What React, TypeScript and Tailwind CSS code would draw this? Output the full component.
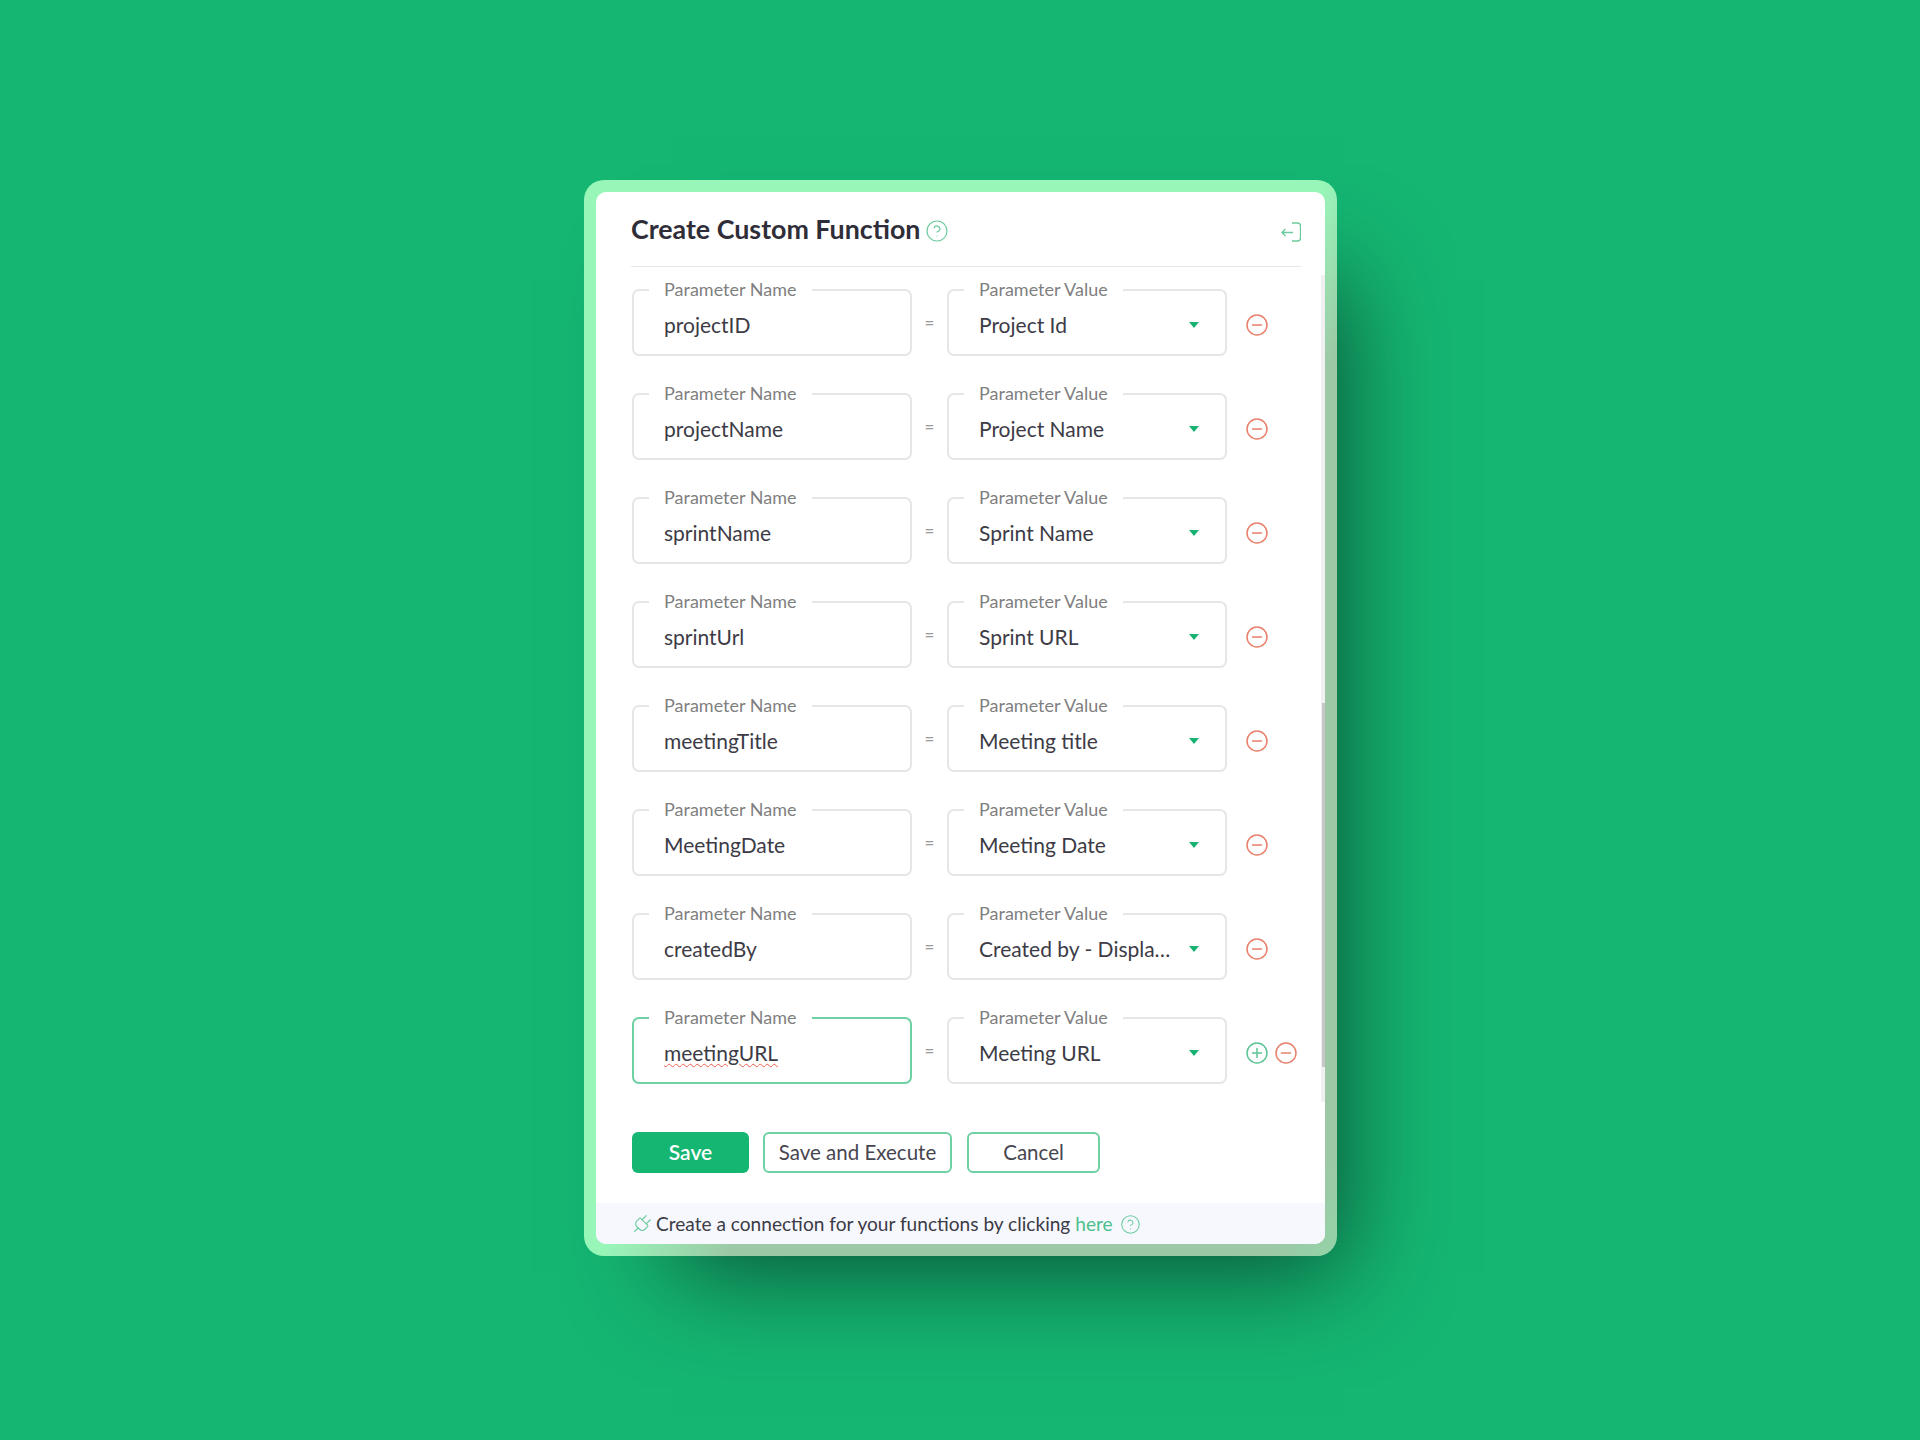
import { CircleHelp, Plug } from "lucide-react";

const rows = [
  { name: "projectID", value: "Project Id" },
  { name: "projectName", value: "Project Name" },
  { name: "sprintName", value: "Sprint Name" },
  { name: "sprintUrl", value: "Sprint URL" },
  { name: "meetingTitle", value: "Meeting title" },
  { name: "MeetingDate", value: "Meeting Date" },
  { name: "createdBy", value: "Created by - Display Name" },
  { name: "meetingURL", value: "Meeting URL", active: true },
];

function RoundIcon({ kind }: { kind: "plus" | "minus" }) {
  const stroke = kind === "plus" ? "#5cc494" : "#e8806c";
  return (
    <svg width="22" height="22" viewBox="0 0 22 22" fill="none" stroke={stroke} strokeWidth="1.5">
      <circle cx="11" cy="11" r="10" />
      <path d="M6.5 11h9" strokeLinecap="round" />
      {kind === "plus" && <path d="M11 6.5v9" strokeLinecap="round" />}
    </svg>
  );
}

function Field({
  label,
  active,
  children,
}: {
  label: string;
  active?: boolean;
  children: React.ReactNode;
}) {
  return (
    <div
      className={`relative flex h-[67px] w-[280px] items-center rounded-[7px] border-2 pl-[30px] pr-[20px] pt-[4px] ${
        active ? "border-[#6fd0a4]" : "border-[#e6e6e6]"
      }`}
    >
      <span className="absolute -top-[13px] left-[15px] bg-white px-[15px] text-[18px] leading-[22px] text-[#7f7f7f]">
        {label}
      </span>
      {children}
    </div>
  );
}

export default function App() {
  return (
    <div className="flex h-[1440px] justify-center bg-[#15b572] pl-px pt-[180px] font-['Lato',sans-serif] text-[#3c3b46]">
      <div className="h-[1076px] w-[753px] rounded-[20px] bg-[linear-gradient(124deg,#98f6b9_50%,#9cc8a5_59%,#9cc8a5_95%,#94d3a8_100%)] p-[12px] shadow-[48px_58px_95px_-42px_rgba(0,0,0,0.55)]">
        <div className="relative flex h-full flex-col overflow-hidden rounded-[10px] bg-white">
          <div className="ml-[35px] mr-[24px] flex h-[75px] items-center justify-between border-b border-[#e8e8e8]">
            <div className="flex items-center gap-[5px]">
              <h1 className="text-[26.8px] font-bold leading-[32px] text-[#2f2d38]">Create Custom Function</h1>
              <CircleHelp size={24} strokeWidth={1.2} className="mt-[4px] text-[#6ccb9e]" />
            </div>
            <svg width="20" height="20" viewBox="0 0 20 20" fill="none" stroke="#6ccb9e" strokeWidth="1.4" className="mt-[5px]">
              <path d="M11 1h5.5a3 3 0 0 1 3 3v12a3 3 0 0 1-3 3H11" />
              <path d="M1 10.5h11M4.5 7l-3.5 3.5 3.5 3.5" />
            </svg>
          </div>

          <div className="flex flex-col gap-[37px] pl-[36px] pt-[22px]">
            {rows.map((row) => (
              <div key={row.name} className="flex items-center">
                <Field label="Parameter Name" active={row.active}>
                  <span
                    className={`text-[21px] leading-[30px] ${
                      row.active ? "underline decoration-[#e8604c] decoration-wavy decoration-1 underline-offset-2" : ""
                    }`}
                  >
                    {row.name}
                  </span>
                </Field>
                <span className="w-[35px] text-center text-[17px] text-[#9a9a9a]">=</span>
                <Field label="Parameter Value">
                  <span className="w-[192px] truncate text-[21px] leading-[30px]">{row.value}</span>
                  <svg width="10" height="6" viewBox="0 0 10 6" className="absolute right-[26px] top-[31px]">
                    <path d="M0 0h10L5 6z" fill="#17b26f" />
                  </svg>
                </Field>
                <div className="ml-[19px] mt-[4px] flex gap-[7px]">
                  {row.active && <RoundIcon kind="plus" />}
                  <RoundIcon kind="minus" />
                </div>
              </div>
            ))}
          </div>

          <div className="mt-[48px] flex gap-[14px] pl-[36px] text-[20.5px]">
            <button className="flex h-[41px] w-[117px] items-center justify-center rounded-[6px] bg-[#15b572] pb-[2px] text-[21px] font-semibold text-white">
              Save
            </button>
            <button className="flex h-[41px] w-[189px] items-center justify-center rounded-[6px] border-2 border-[#6fd0a4] text-[#47464f]">
              Save and Execute
            </button>
            <button className="ml-[1px] flex h-[41px] w-[133px] items-center justify-center rounded-[6px] border-2 border-[#6fd0a4] text-[#47464f]">
              Cancel
            </button>
          </div>

          <div className="mt-auto flex h-[41px] items-center bg-[#f7f8fd] pl-[34px] pt-[2px] text-[19.1px]">
            <Plug size={23} strokeWidth={1.2} className="mr-[3px] rotate-45 text-[#6ccb9e]" />
            <span>Create a connection for your functions by clicking</span>
            <span className="ml-[5px] text-[#4cc08b]">here</span>
            <CircleHelp size={21} strokeWidth={1.2} className="ml-[7px] text-[#6ccb9e]" />
          </div>

          {/* scrollbar of the parameter list */}
          <div className="absolute right-0 top-[83px] h-[827px] w-[4px] bg-[#f0f0f2]">
            <div className="ml-[1px] mt-[428px] h-[364px] w-[3px] bg-[#c6c6c6]" />
          </div>
        </div>
      </div>
    </div>
  );
}
